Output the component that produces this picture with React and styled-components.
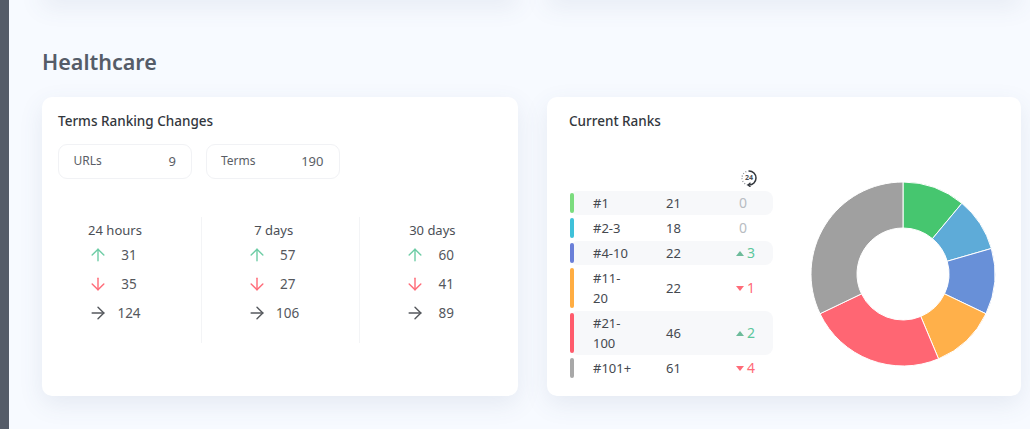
import styled, { createGlobalStyle } from 'styled-components';
import { ArrowUp, ArrowDown, ArrowRight } from 'lucide-react';

const GlobalStyle = createGlobalStyle`
  html, body {
    margin: 0;
    padding: 0;
    height: 429px;
    overflow: hidden;
    background: #f7faff;
    font-family: "Noto Sans", "Open Sans", sans-serif;
    color: #4b4f56;
  }
  * { box-sizing: border-box; }
`;

const stats = [
  { label: '24 hours', up: 31, down: 35, same: 124 },
  { label: '7 days', up: 57, down: 27, same: 106 },
  { label: '30 days', up: 60, down: 41, same: 89 },
];

const ranks = [
  { label: '#1', count: 21, delta: 0, bar: '#7bdc7e', slice: '#46c66f' },
  { label: '#2-3', count: 18, delta: 0, bar: '#3fc1d9', slice: '#5eabd8' },
  { label: '#4-10', count: 22, delta: 3, bar: '#6a7fd8', slice: '#6890d8' },
  { label: '#11-20', count: 22, delta: -1, bar: '#ffad42', slice: '#ffb04a' },
  { label: '#21-100', count: 46, delta: 2, bar: '#ff5b6c', slice: '#ff6673' },
  { label: '#101+', count: 61, delta: -4, bar: '#a8a8a8', slice: '#a0a0a0' },
];

function slicePath(start, end, R, r) {
  const pt = (rad, a) => `${100 + rad * Math.sin(a)} ${100 - rad * Math.cos(a)}`;
  const large = end - start > Math.PI ? 1 : 0;
  return `M${pt(R, start)} A${R} ${R} 0 ${large} 1 ${pt(R, end)} L${pt(r, end)} A${r} ${r} 0 ${large} 0 ${pt(r, start)} Z`;
}

function Donut() {
  const total = ranks.reduce((sum, r) => sum + r.count, 0);
  let angle = 0;
  return (
    <DonutSvg viewBox="0 0 200 200">
      {ranks.map((r) => {
        const start = angle;
        angle += (r.count / total) * Math.PI * 2;
        return <path key={r.label} d={slicePath(start, angle, 92, 46)} fill={r.slice} stroke="#fff" strokeWidth="1" />;
      })}
    </DonutSvg>
  );
}

function Clock24() {
  return (
    <svg width="18" height="18" viewBox="0 0 18 18" fill="none">
      <path d="M9 2 A7 7 0 0 1 9 16" stroke="#33373d" strokeWidth="1.5" />
      <path d="M9 2 A7 7 0 0 0 9 16" stroke="#8a8f96" strokeWidth="1.3" strokeDasharray="1 1.8" />
      <path d="M10.5 13.8 L8 16 L10.5 18" stroke="#33373d" strokeWidth="1.2" />
      <text x="9" y="11.4" textAnchor="middle" fontSize="7" fontWeight="700" fill="#4b4f56" fontFamily="Noto Sans, sans-serif">24</text>
    </svg>
  );
}

export default function App() {
  return (
    <>
      <GlobalStyle />
      <Page>
        <Sidebar />
        <Main>
          <Grid>
            <CutCard />
            <CutCard />
          </Grid>
          <Heading>Healthcare</Heading>
          <Grid>
            <Card>
              <CardTitle>Terms Ranking Changes</CardTitle>
              <Pills>
                <Pill><span>URLs</span><PillValue>9</PillValue></Pill>
                <Pill><span>Terms</span><PillValue>190</PillValue></Pill>
              </Pills>
              <StatColumns>
                {stats.map((s) => (
                  <StatColumn key={s.label}>
                    <StatLabel>{s.label}</StatLabel>
                    <StatRow>
                      <ArrowUp size={20} strokeWidth={1.7} color="#6fcda6" />
                      <span>{s.up}</span>
                    </StatRow>
                    <StatRow>
                      <ArrowDown size={20} strokeWidth={1.7} color="#ff6b78" />
                      <span>{s.down}</span>
                    </StatRow>
                    <StatRow>
                      <ArrowRight size={20} strokeWidth={1.7} color="#55585d" />
                      <span>{s.same}</span>
                    </StatRow>
                  </StatColumn>
                ))}
              </StatColumns>
            </Card>
            <RanksCard>
              <CardTitle>Current Ranks</CardTitle>
              <RanksBody>
                <RankTable>
                  <RankHead><Clock24 /></RankHead>
                  {ranks.map((r, i) => (
                    <RankRow key={r.label} $striped={i % 2 === 0}>
                      <RankBar $color={r.bar} />
                      <RankLabel>{r.label}</RankLabel>
                      <span>{r.count}</span>
                      <Delta $value={r.delta}>
                        {r.delta !== 0 && <Triangle $up={r.delta > 0} />}
                        {Math.abs(r.delta)}
                      </Delta>
                    </RankRow>
                  ))}
                </RankTable>
                <Donut />
              </RanksBody>
            </RanksCard>
          </Grid>
        </Main>
      </Page>
    </>
  );
}

const Page = styled.div`
  display: flex;
  height: 429px;
  overflow: hidden;
`;

const Sidebar = styled.div`
  width: 9px;
  flex-shrink: 0;
  background: #555c68;
`;

const Main = styled.main`
  flex: 1;
  padding-left: 33px;
`;

const Grid = styled.div`
  display: grid;
  grid-template-columns: 476px 474px;
  gap: 29px;
`;

const CutCard = styled.div`
  height: 20px;
  margin-top: -20px;
  box-shadow: 0 6px 24px rgba(70, 90, 130, 0.1);
`;

const Heading = styled.h2`
  margin: 46px 0 0;
  height: 51px;
  font-size: 21.5px;
  line-height: 32px;
  font-weight: 600;
  color: #555c68;
`;

const Card = styled.section`
  height: 299px;
  padding: 14px 16px;
  background: #fff;
  border-radius: 10px;
  box-shadow: 0 8px 24px rgba(70, 90, 130, 0.1);
`;

const RanksCard = styled(Card)`
  padding-left: 22px;
  padding-right: 26px;
`;

const CardTitle = styled.h3`
  margin: 0;
  font-size: 13.5px;
  line-height: 20px;
  font-weight: 500;
  color: #33373d;
`;

const Pills = styled.div`
  display: flex;
  gap: 13.5px;
  margin-top: 13px;
`;

const Pill = styled.div`
  width: 134px;
  height: 35px;
  display: flex;
  align-items: center;
  justify-content: space-between;
  padding: 0 15px 2px 14.5px;
  border: 1px solid #f1f2f5;
  border-radius: 9px;
  font-size: 12px;
  color: #5a5e66;
`;

const PillValue = styled.span`
  font-size: 13px;
`;

const StatColumns = styled.div`
  display: grid;
  grid-template-columns: repeat(3, 1fr);
  margin: 38px -16px 0;
`;

const StatColumn = styled.div`
  height: 126px;
  padding: 4px 0 0 46px;
  & + & {
    padding-left: 45px;
    border-left: 1px solid #f3f4f6;
  }
`;

const StatLabel = styled.div`
  width: 54px;
  margin-bottom: 1px;
  text-align: center;
  white-space: nowrap;
  font-size: 13px;
  line-height: 18px;
  color: #4b4f56;
`;

const StatRow = styled.div`
  display: grid;
  grid-template-columns: 20px 42px;
  height: 29px;
  align-items: center;
  justify-items: center;
  font-size: 13.5px;
  color: #55585d;
`;

const RanksBody = styled.div`
  display: flex;
  align-items: flex-start;
  justify-content: space-between;
  margin-top: 35px;
`;

const RankTable = styled.div`
  width: 203px;
  margin-left: 1px;
  display: flex;
  flex-direction: column;
  gap: 1px;
`;

const RankHead = styled.div`
  height: 24px;
  padding: 3px 0 0 170px;
`;

const RankRow = styled.div`
  display: grid;
  grid-template-columns: 23px 73px 56px 1fr;
  align-items: center;
  min-height: 24px;
  padding: 2px 0;
  border-radius: 8px;
  background: ${(p) => (p.$striped ? '#f7f8fa' : 'transparent')};
  font-size: 13px;
  line-height: 20px;
  color: #45494f;
`;

const RankBar = styled.div`
  width: 4px;
  height: 100%;
  min-height: 20px;
  border-radius: 2px;
  background: ${(p) => p.$color};
`;

const RankLabel = styled.div`
  width: 40px;
`;

const Delta = styled.div`
  display: flex;
  align-items: center;
  gap: 3px;
  padding-left: ${(p) => (p.$value === 0 ? '17px' : '14px')};
  font-size: 14px;
  color: ${(p) => (p.$value > 0 ? '#5cc79b' : p.$value < 0 ? '#ff6b78' : '#b8bcc2')};
`;

const Triangle = styled.span`
  width: 0;
  height: 0;
  border-left: 4px solid transparent;
  border-right: 4px solid transparent;
  ${(p) => (p.$up ? 'border-bottom: 5px solid #6dbb9a;' : 'border-top: 5px solid #ff6b78;')}
`;

const DonutSvg = styled.svg`
  width: 200px;
  height: 200px;
  flex-shrink: 0;
  margin: 8px -8px 0 0;
`;
